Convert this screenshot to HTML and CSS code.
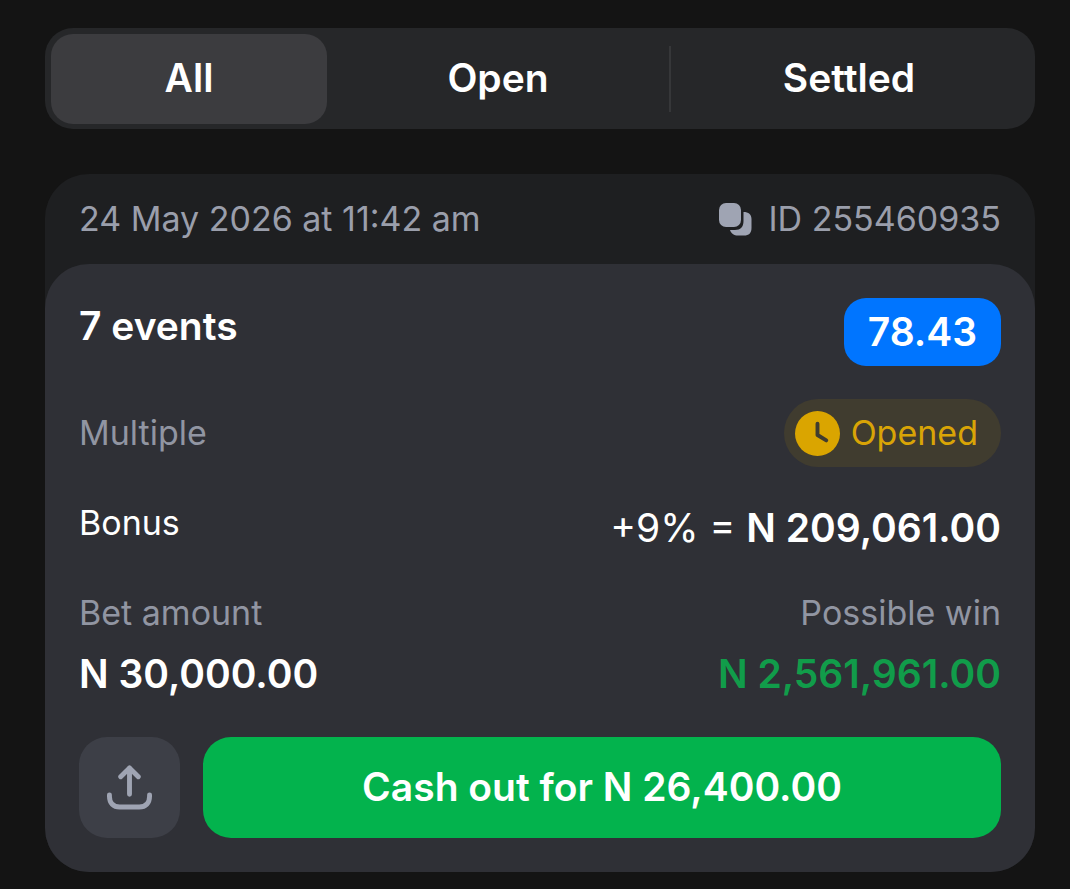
FILE: index.html
```html
<!DOCTYPE html>
<html lang="en">
<head>
    <meta charset="UTF-8">
    <meta name="viewport" content="width=device-width, initial-scale=1.0">
    <title>Bet history</title>
    <link rel="stylesheet" href="styles.css">
</head>
<body>
    <nav class="tabs">
        <button type="button" class="tab active">All</button>
        <button type="button" class="tab">Open</button>
        <button type="button" class="tab divided">Settled</button>
    </nav>

    <main class="bet-card">
        <header class="bet-header">
            <span>24 May 2026 at 11:42 am</span>
            <button type="button" class="copy-id">
                <svg class="copy-icon" viewBox="0 0 34 34" aria-hidden="true">
                    <rect x="1" y="1" width="22" height="24" rx="7"/>
                    <path d="M25.500 10C30.500 10 33.500 12.500 33.500 17V26C33.500 31 31 33.500 26 33.500H20C16 33.500 13 31.500 12 28H17C22.500 28 25.500 25 25.500 19Z"/>
                </svg>
                ID 255460935
            </button>
        </header>

        <section class="bet-body">
            <div class="row">
                <h2 class="large">7 events</h2>
                <span class="odds">78.43</span>
            </div>
            <div class="row middle">
                <span class="muted">Multiple</span>
                <span class="status">
                    <svg class="clock-icon" viewBox="0 0 46 46" aria-hidden="true">
                        <circle cx="23" cy="23" r="23"/>
                        <path d="M23 13V24.500L32 30"/>
                    </svg>
                    Opened
                </span>
            </div>
            <div class="row">
                <span>Bonus</span>
                <span class="bonus">+9% = <strong>N 209,061.00</strong></span>
            </div>
            <dl class="row amounts">
                <div>
                    <dt>Bet amount</dt>
                    <dd>N 30,000.00</dd>
                </div>
                <div class="win">
                    <dt>Possible win</dt>
                    <dd>N 2,561,961.00</dd>
                </div>
            </dl>
            <div class="actions">
                <button type="button" class="share" aria-label="Share">
                    <svg class="share-icon" viewBox="0 0 46 46" aria-hidden="true">
                        <path d="M23 30V3M14 12L23 3L32 12"/>
                        <path d="M2.500 30.500V32C2.500 39 6.500 43 13 43H33C39.500 43 43.500 39 43.500 32V30.500"/>
                    </svg>
                </button>
                <button type="button" class="cash-out">Cash out for N 26,400.00</button>
            </div>
        </section>
    </main>
</body>
</html>
```
FILE: styles.css
```css
* {
    box-sizing: border-box;
}
body {
    margin: 0;
    padding: 28px 35px 17px 45px;
    background-color: #141414;
    color: #fff;
    font-family: Inter, sans-serif;
    font-size: 34px;
    line-height: 46px;
    font-optical-sizing: none;
}
button {
    border: 0;
    padding: 0;
    background: none;
    color: inherit;
    font: inherit;
    cursor: pointer;
}
svg {
    display: block;
    flex: none;
}

/* Filter tabs */
.tabs {
    display: grid;
    grid-template-columns: 46fr 57fr 60fr;
    padding: 6px 6px 5px;
    margin-bottom: 45px;
    border-radius: 28px;
    background-color: #262729;
}
.tab {
    height: 90px;
    padding-bottom: 2px;
    border-radius: 22px;
    font-size: 39px;
    font-weight: 600;
    line-height: 56px;
}
.tab.active {
    background-color: #3c3c3f;
}
.tab.divided {
    border-radius: 0;
    background: linear-gradient(#363739, #363739) left center / 2px 66px no-repeat;
}

/* Bet card */
.bet-card {
    border-radius: 44px;
    background-color: #1e1f21;
}
.bet-header {
    display: flex;
    justify-content: space-between;
    padding: 22px 34px;
    color: #9a9eab;
}
.copy-id {
    display: flex;
    align-items: center;
    gap: 16px;
}
.copy-icon {
    width: 34px;
    height: 34px;
    fill: #9fa4b3;
}
.bet-body {
    display: flex;
    flex-direction: column;
    gap: 33px;
    padding: 34px;
    border-radius: 44px;
    background-color: #2f3036;
}
.row {
    display: flex;
    justify-content: space-between;
    align-items: flex-start;
    margin: 0;
}
.middle {
    align-items: center;
}
.large,
.odds,
.bonus,
.amounts dd,
.cash-out {
    margin: 0;
    font-size: 39px;
    font-weight: 600;
    line-height: 56px;
}
.bonus {
    font-weight: 400;
}
.bonus strong {
    font-weight: 600;
}
.muted,
.amounts dt {
    color: #9195a2;
}
.odds {
    padding: 6px 24px;
    border-radius: 22px;
    background-color: #0075ff;
}
.status {
    display: flex;
    align-items: center;
    gap: 11px;
    padding: 11px 23px 11px 11px;
    border-radius: 34px;
    background-color: #403c2f;
    color: #d9a406;
}
.clock-icon {
    width: 45px;
    height: 45px;
    fill: #daa500;
}
.clock-icon path {
    fill: none;
    stroke: #403c2f;
    stroke-width: 4;
    stroke-linecap: round;
    stroke-linejoin: round;
}
.amounts {
    padding-top: 1px;
}
.amounts dd {
    margin-top: 10px;
}
.win {
    text-align: right;
}
.win dd {
    color: #119c4a;
}

/* Buttons at the bottom */
.actions {
    display: flex;
    gap: 23px;
    margin-top: 2px;
}
.share {
    display: grid;
    place-items: center;
    width: 101px;
    height: 101px;
    border-radius: 28px;
    background-color: #3d3f47;
}
.share-icon {
    width: 45px;
    height: 45px;
    fill: none;
    stroke: #9fa4b3;
    stroke-width: 5;
    stroke-linecap: round;
    stroke-linejoin: round;
}
.cash-out {
    flex: 1;
    padding-bottom: 2px;
    border-radius: 28px;
    background-color: #03b34d;
}
```
